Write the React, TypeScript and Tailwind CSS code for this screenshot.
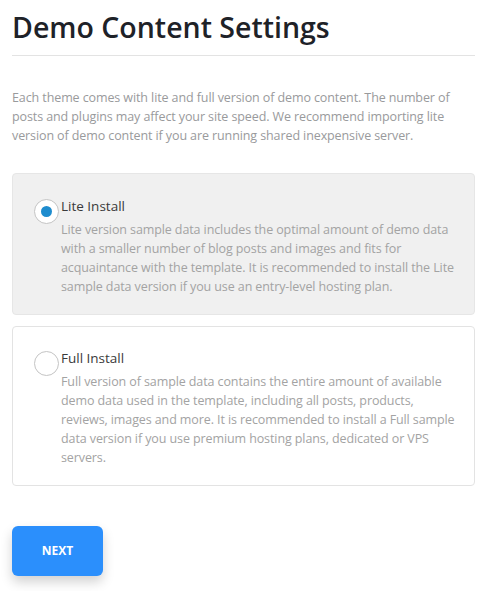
import React, { useState } from "react";

const options = [
  {
    id: "lite",
    title: "Lite Install",
    text: "Lite version sample data includes the optimal amount of demo data with a smaller number of blog posts and images and fits for acquaintance with the template. It is recommended to install the Lite sample data version if you use an entry-level hosting plan.",
  },
  {
    id: "full",
    title: "Full Install",
    text: "Full version of sample data contains the entire amount of available demo data used in the template, including all posts, products, reviews, images and more. It is recommended to install a Full sample data version if you use premium hosting plans, dedicated or VPS servers.",
  },
];

export default function App() {
  const [selected, setSelected] = useState("lite");

  return (
    <div className="w-[491px] min-h-[591px] bg-white pl-3 pr-4 pt-[8px] font-['Open_Sans',sans-serif]">
      <h1 className="text-[28.5px] leading-[38px] font-semibold text-[#1e2228] pb-[9px] border-b border-[#e3e3e3]">
        Demo Content Settings
      </h1>
      <p className="mt-[32px] text-[12.5px] leading-[19px] text-[#999a9c] tracking-[-0.1px]">
        Each theme comes with lite and full version of demo content. The number of posts and plugins
        may affect your site speed. We recommend importing lite version of demo content if you are
        running shared inexpensive server.
      </p>

      <div className="mt-[28px] flex flex-col gap-[11px]">
        {options.map((o) => {
          const active = selected === o.id;
          return (
            <label
              key={o.id}
              onClick={() => setSelected(o.id)}
              className={`flex items-start rounded-[4px] border pl-[21px] pr-3 cursor-pointer ${
                active
                  ? "bg-[#f0f0f0] border-[#e6e6e6] pt-[22px] pb-[18px]"
                  : "bg-white border-[#e3e3e3] pt-[21px] pb-[18px]"
              }`}
            >
              <span className="mt-[3px] w-[25px] h-[25px] shrink-0 rounded-full border border-[#c4c4c4] bg-white flex items-center justify-center">
                {active && <span className="w-[11px] h-[11px] rounded-full bg-[#1e8cce]" />}
              </span>
              <span className="flex flex-col pl-[2px]">
                <span className="text-[13.5px] leading-[20px] text-[#3a3a3a]">{o.title}</span>
                <span className="mt-[4px] text-[12.5px] leading-[19px] text-[#a3a3a3] tracking-[-0.1px]">
                  {o.text}
                </span>
              </span>
            </label>
          );
        })}
      </div>

      <button className="mt-[40px] w-[91px] h-[50px] rounded-[6px] bg-[#2b8ffc] text-white text-[12px] font-bold shadow-[0_6px_12px_rgba(0,0,0,0.18)]">
        NEXT
      </button>
    </div>
  );
}
